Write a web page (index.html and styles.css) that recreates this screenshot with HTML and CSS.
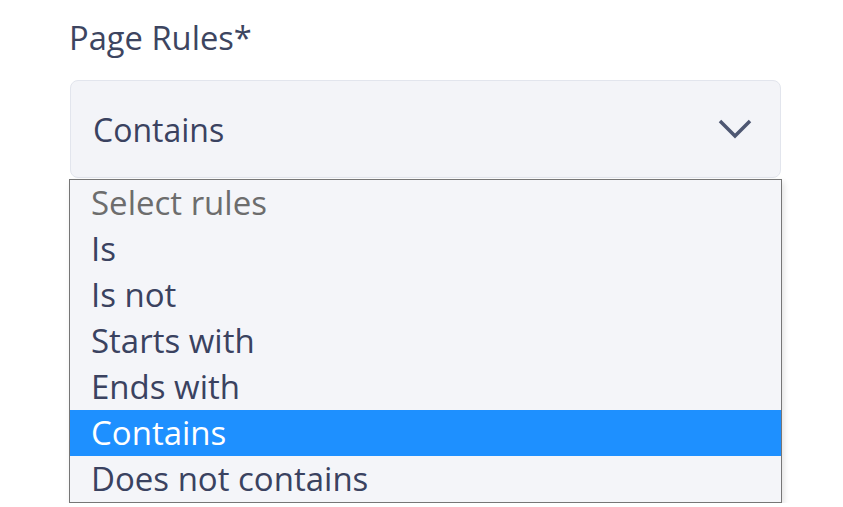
FILE: index.html
```html
<!DOCTYPE html>
<html lang="en">
<head>
    <meta charset="UTF-8">
    <title>Page Rules</title>
    <link rel="stylesheet" href="styles.css">
</head>
<body>
    <div class="field">
        <label class="field-label">Page Rules*</label>
        <div class="select-box">
            <span class="select-value">Contains</span>
            <svg class="chevron" width="34" height="20" viewBox="0 0 34 20">
                <path d="M2 2 L17 17 L32 2" fill="none" stroke="#4e5772" stroke-width="3.5"/>
            </svg>
        </div>
        <ul class="options">
            <li class="option placeholder">Select rules</li>
            <li class="option">Is</li>
            <li class="option">Is not</li>
            <li class="option">Starts with</li>
            <li class="option">Ends with</li>
            <li class="option selected">Contains</li>
            <li class="option">Does not contains</li>
        </ul>
    </div>
</body>
</html>
```

FILE: styles.css
```css
body {
    margin: 0;
    background: #ffffff;
    font-family: 'Open Sans', 'Noto Sans', sans-serif;
    color: #3a4260;
}
.field {
    width: 713px;
    margin-left: 69px;
    padding-top: 14px;
}
.field-label {
    display: block;
    font-size: 32.7px;
    line-height: 48px;
    color: #3d4560;
    margin-bottom: 18px;
}
.select-box {
    margin: 0 1px;
    height: 98px;
    box-sizing: border-box;
    border: 1px solid #e2e5ed;
    border-radius: 8px;
    background: #f3f4f8;
    display: flex;
    align-items: center;
    justify-content: space-between;
    padding: 0 28px 0 22px;
}
.select-value {
    font-size: 32px;
}
.chevron {
    display: block;
}
.options {
    list-style: none;
    margin: 1px 0 0;
    padding: 0;
    border: 1px solid #767676;
    background: #f4f5f9;
    box-shadow: 2px 3px 6px rgba(0, 0, 0, 0.12);
}
.option {
    height: 46px;
    line-height: 46px;
    font-size: 33px;
    padding-left: 21px;
}
.placeholder {
    color: #6d6d6d;
}
.selected {
    background: #1e90ff;
    color: #ffffff;
}
```
